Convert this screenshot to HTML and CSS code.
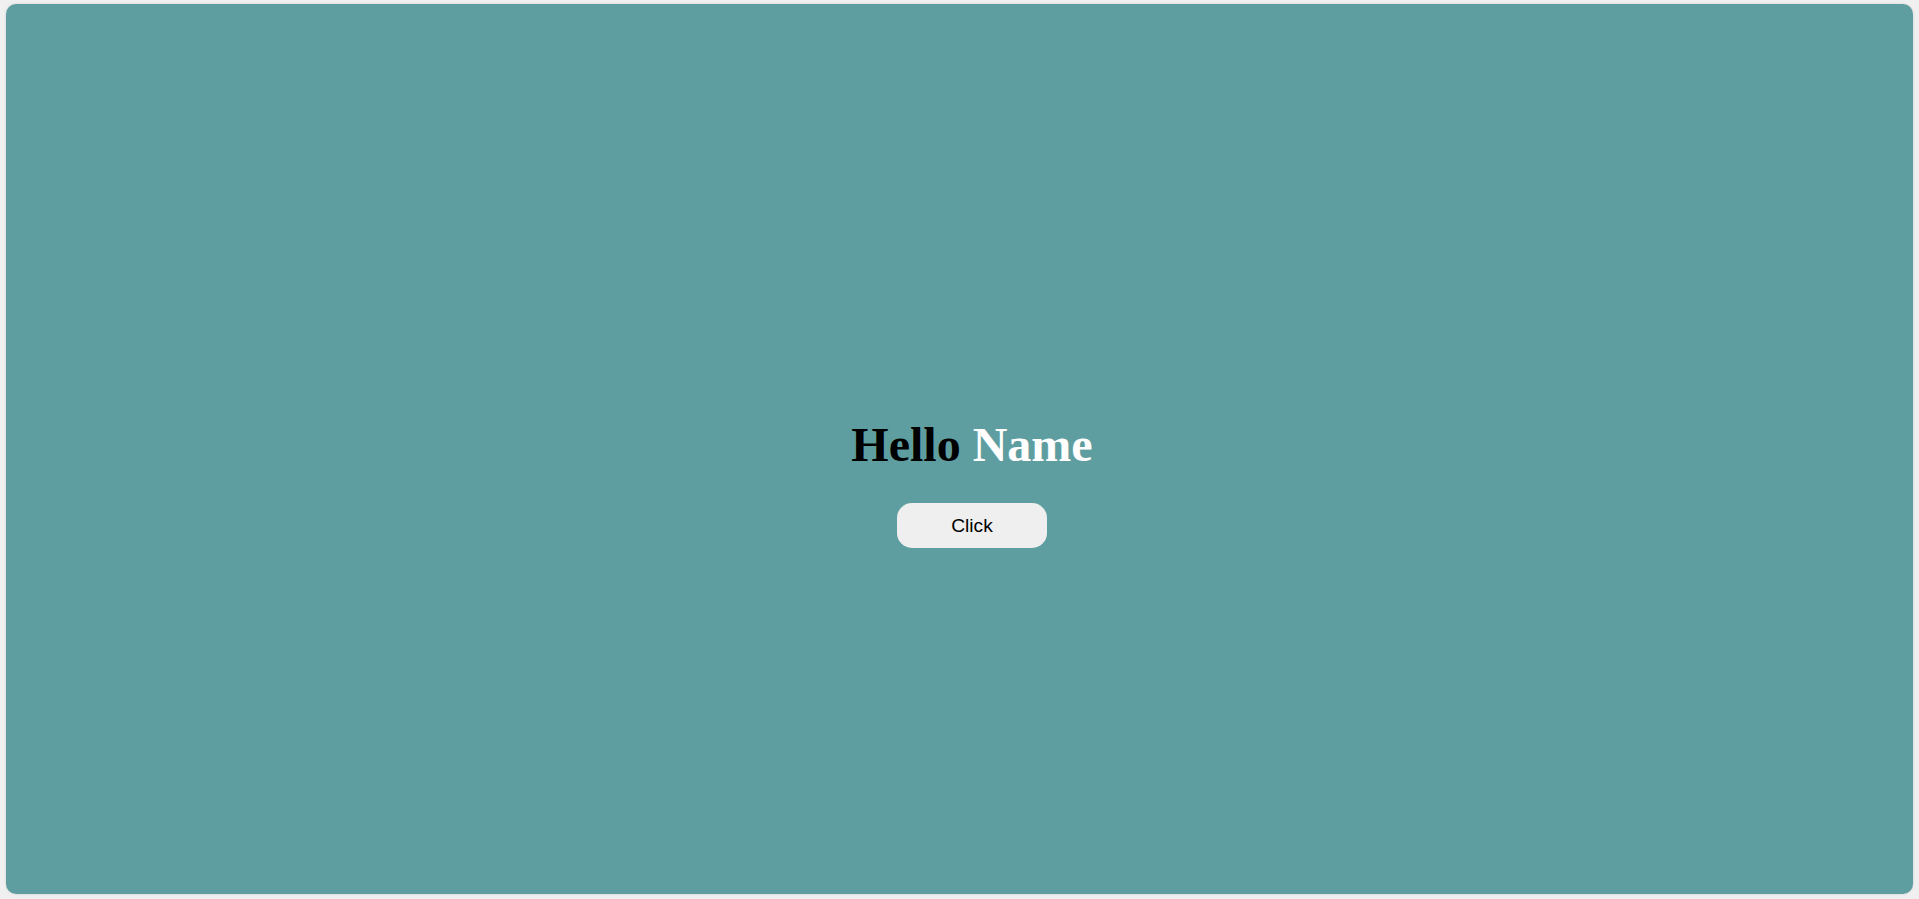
FILE: index.html
```html
<!DOCTYPE html>
<html lang="en">
<head>
<meta charset="utf-8">
<title>Hello Name</title>
<link rel="stylesheet" href="styles.css">
</head>
<body>
<div class="page">
  <main class="card">
    <h1 class="greeting">Hello <span class="name">Name</span></h1>
    <button class="click-btn" type="button">Click</button>
  </main>
</div>
</body>
</html>
```

FILE: styles.css
```css
html, body {
  margin: 0;
  padding: 0;
  height: 100%;
}
body {
  background: #f0f0f0;
  font-family: "Liberation Serif", "Times New Roman", serif;
}
.page {
  box-sizing: border-box;
  height: 899px;
  padding: 4px 6px 5px 6px;
  display: flex;
}
.card {
  flex: 1;
  background: #5f9ea0;
  border-radius: 10px;
  box-shadow: 0 0 3px rgba(0,0,0,0.12);
  display: flex;
  flex-direction: column;
  align-items: center;
  justify-content: center;
  padding-left: 25px;
  padding-top: 68px;
  box-sizing: border-box;
}
.greeting {
  margin: 0 0 32px 0;
  font-size: 48px;
  font-weight: bold;
  line-height: 53px;
  color: #000;
}
.name {
  color: #fff;
}
.click-btn {
  width: 150px;
  height: 45px;
  border: none;
  border-radius: 15px;
  background: #efefef;
  color: #000;
  font-family: "Liberation Sans", Arial, sans-serif;
  font-size: 19.2px;
  padding: 0;
}
```
